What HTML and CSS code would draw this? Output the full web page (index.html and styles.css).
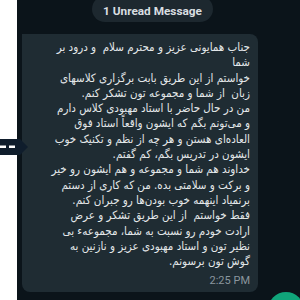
FILE: index.html
```html
<!DOCTYPE html>
<html>
<head>
    <title>Chat</title>
    <link rel="stylesheet" href="styles.css">
</head>
<body>
    <div class="rail"></div>

    <div class="chat">
        <div class="pill">1 Unread Message</div>

        <div class="bubble">
            <p class="text" dir="rtl">
                جناب همایونی عزیز و محترم سلام&nbsp; و درود بر<br>
                شما<br>
                خواستم از این طریق بابت برگزاری کلاسهای<br>
                زبان&nbsp; از شما و مجموعه تون تشکر کنم.<br>
                من در حال حاضر با استاد مهبودی کلاس دارم<br>
                و می‌تونم بگم که ایشون واقعاً استاد فوق<br>
                العاده‌ای هستن و هر چه از نظم و تکنیک خوب<br>
                ایشون در تدریس بگم، کم گفتم.<br>
                خداوند هم شما و مجموعه و هم ایشون رو خیر<br>
                و برکت و سلامتی بده. من که کاری از دستم<br>
                برنمیاد اینهمه خوب بودن‌ها رو جبران کنم.<br>
                فقط خواستم&nbsp; از این طریق تشکر و عرض<br>
                ارادت خودم رو نسبت به شما، مجموعهء بی<br>
                نظیر تون و استاد مهبودی عزیز و نازنین به<br>
                گوش تون برسونم.
            </p>
            <div class="time">2:25 PM</div>
        </div>

        <div class="bubble next"></div>
    </div>

    <!-- things that sit over the chat -->
    <svg class="arrow" width="30" height="22" viewBox="0 0 30 22">
        <polygon points="0,3 20,3 28,11 20,19 0,19" fill="#0f1d2c"/>
        <rect x="0" y="9.5" width="6" height="2.5" fill="#fff"/>
        <rect x="9" y="9.5" width="6" height="2.5" fill="#fff"/>
    </svg>
    <div class="fab"></div>
</body>
</html>
```

FILE: styles.css
```css
* {
    margin: 0;
    padding: 0;
    box-sizing: border-box;
}

body {
    width: 300px;
    height: 300px;
    overflow: hidden;
    display: flex;
    background: #0b141a;
    font-family: Roboto, "DejaVu Sans", sans-serif;
}

.rail {
    width: 17px;
    flex-shrink: 0;
    background: #ffffff;
}

.chat {
    flex: 1;
    display: flex;
    flex-direction: column;
    background: #0b141a;
}

.pill {
    align-self: center;
    margin-top: -4px;
    margin-left: -12px;
    height: 26px;
    padding: 4px 11px 0;
    border-radius: 13px;
    background: #1d282f;
    color: #d9dee1;
    font-size: 11.8px;
    font-weight: 700;
    line-height: 22px;
}

.bubble {
    width: 236px;
    margin: 12px 0 0 5px;
    padding: 6px 8px 4px 8px;
    background: #1f2c33;
    border-radius: 0 8px 8px 8px;
}

.text {
    font-family: "DejaVu Sans Condensed", "DejaVu Sans", sans-serif;
    font-size: 11.5px;
    line-height: 15.3px;
    color: #e4e8ea;
    text-align: right;
    white-space: nowrap;
}

.time {
    text-align: right;
    font-size: 11px;
    line-height: 14px;
    margin-top: 5px;
    color: #8a969e;
}

.bubble.next {
    margin-top: 8px;
    height: 30px;
    border-radius: 8px;
}

.arrow {
    position: absolute;
    left: 0;
    top: 136px;
}

.fab {
    position: absolute;
    left: 268px;
    top: 292px;
    width: 36px;
    height: 36px;
    border-radius: 50%;
    background: #10a57a;
}
```
